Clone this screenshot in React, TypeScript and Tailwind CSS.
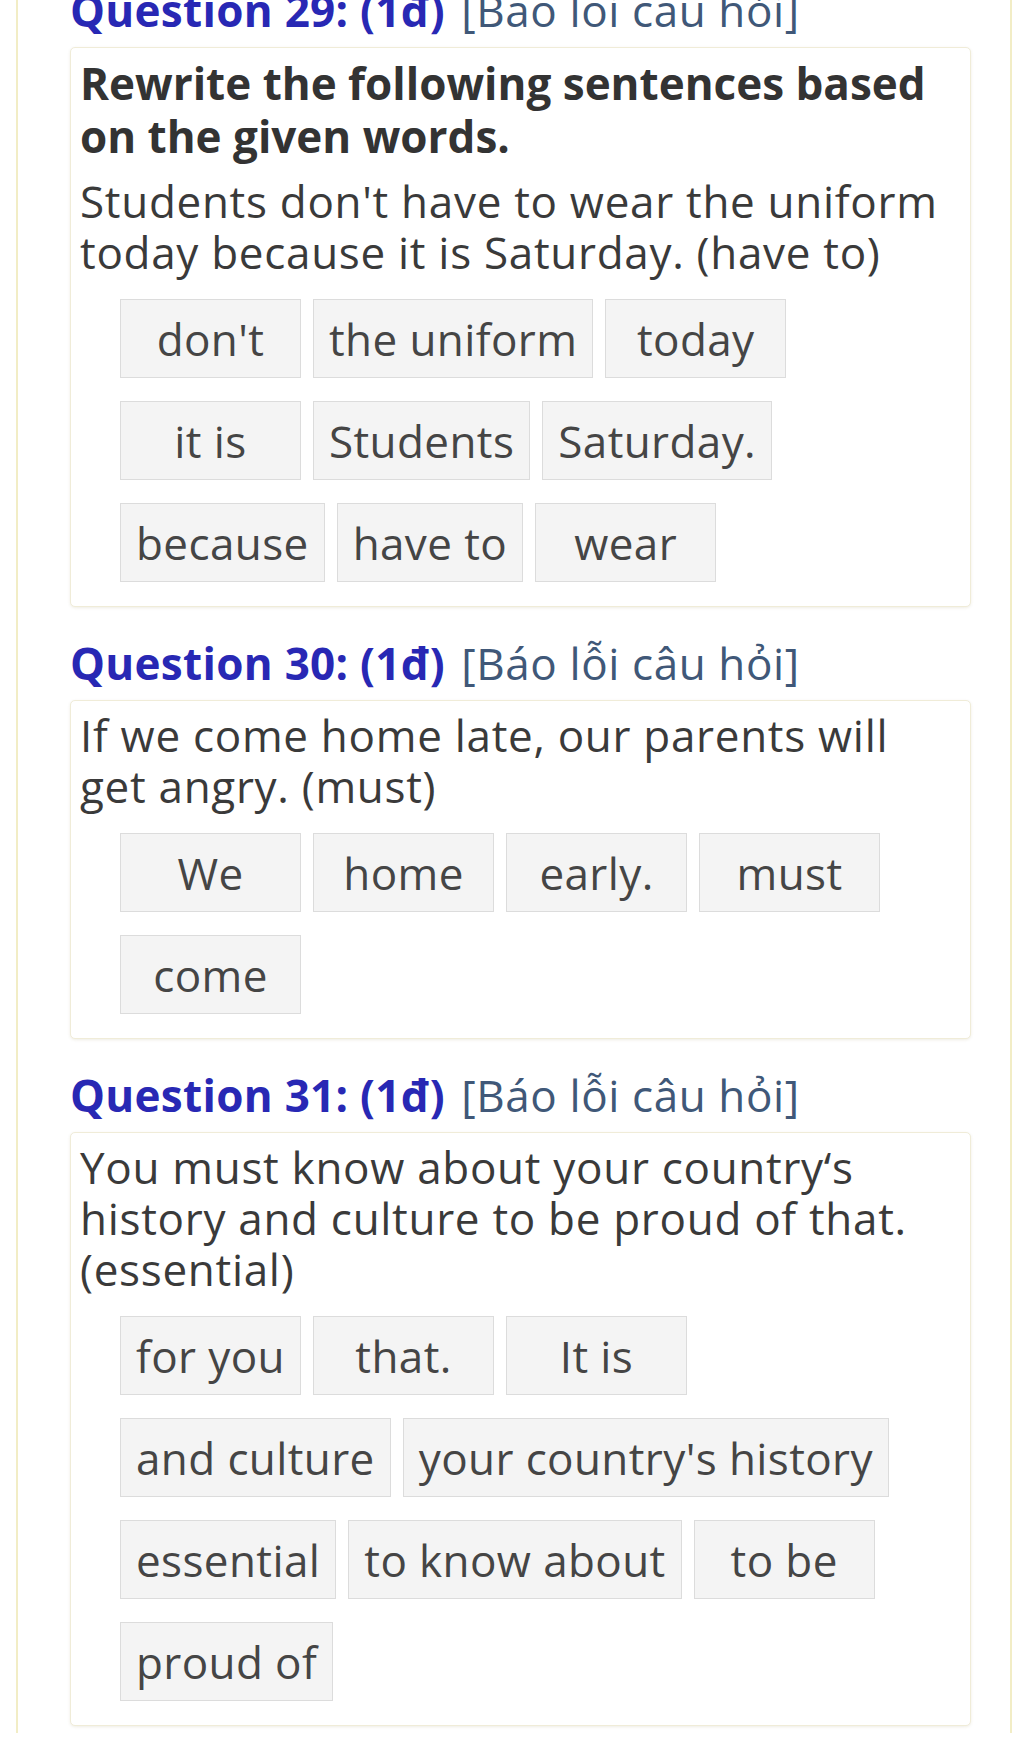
type Question = {
  num: number;
  instruction?: string[];
  prompt: string[];
  rows: string[][];
};

const questions: Question[] = [
  {
    num: 29,
    instruction: ["Rewrite the following sentences based", "on the given words."],
    prompt: ["Students don't have to wear the uniform", "today because it is Saturday. (have to)"],
    rows: [
      ["don't", "the uniform", "today"],
      ["it is", "Students", "Saturday."],
      ["because", "have to", "wear"],
    ],
  },
  {
    num: 30,
    prompt: ["If we come home late, our parents will", "get angry. (must)"],
    rows: [["We", "home", "early.", "must"], ["come"]],
  },
  {
    num: 31,
    prompt: [
      "You must know about your country\u2018s",
      "history and culture to be proud of that.",
      "(essential)",
    ],
    rows: [
      ["for you", "that.", "It is"],
      ["and culture", "your country's history"],
      ["essential", "to know about", "to be"],
      ["proud of"],
    ],
  },
];

function Lines({ lines }: { lines: string[] }) {
  return (
    <>
      {lines.map((l, i) => (
        <span key={i} className="block whitespace-nowrap">
          {l}
        </span>
      ))}
    </>
  );
}

function Chip({ word }: { word: string }) {
  return (
    <div className="flex h-[79px] min-w-[181px] items-center justify-center whitespace-nowrap border-[1.5px] border-[#dcdcdc] bg-[#f4f4f4] px-[15px] text-[44px] tracking-[0.4px] text-[#454545]">
      {word}
    </div>
  );
}

function QuestionBlock({ q, first }: { q: Question; first: boolean }) {
  return (
    <section>
      <h2
        className={`${first ? "-mt-[15px]" : "mt-[31px]"} mb-[12px] whitespace-nowrap text-[44px] leading-[50px]`}
      >
        <span className="font-bold tracking-[0.3px] text-[#2828b4]">
          Question {q.num}: (1đ)
        </span>{" "}
        <span className="ml-[5px] tracking-[0.6px] text-[#405878]">[Báo lỗi câu hỏi]</span>
      </h2>

      <div className="rounded-[5px] border border-[#f0ecd8] bg-white pb-[24px] pl-[9px] pr-[12px] pt-[9px] shadow-[0_1px_3px_rgba(120,110,40,0.12)]">
        {q.instruction ? (
          <p className="mb-[13px] text-[44px] font-bold leading-[53px] text-[#333]">
            <Lines lines={q.instruction} />
          </p>
        ) : null}
        <p className="text-[44px] leading-[51px] tracking-[0.7px] text-[#3a3a3a]">
          <Lines lines={q.prompt} />
        </p>

        <div className="ml-[40px] mt-[21px] flex flex-col gap-[23px]">
          {q.rows.map((row, i) => (
            <div key={i} className="flex gap-[12px]">
              {row.map((w) => (
                <Chip key={w} word={w} />
              ))}
            </div>
          ))}
        </div>
      </div>
    </section>
  );
}

export default function App() {
  return (
    <div
      className="h-[1748px] overflow-hidden bg-white"
      style={{ fontFamily: "'Open Sans', 'Noto Sans', sans-serif" }}
    >
      <div className="ml-[16px] h-full w-[996px] border-x-2 border-[#f2edc6] pl-[52px] pr-[39px]">
        {questions.map((q, i) => (
          <QuestionBlock key={q.num} q={q} first={i === 0} />
        ))}
      </div>
    </div>
  );
}
